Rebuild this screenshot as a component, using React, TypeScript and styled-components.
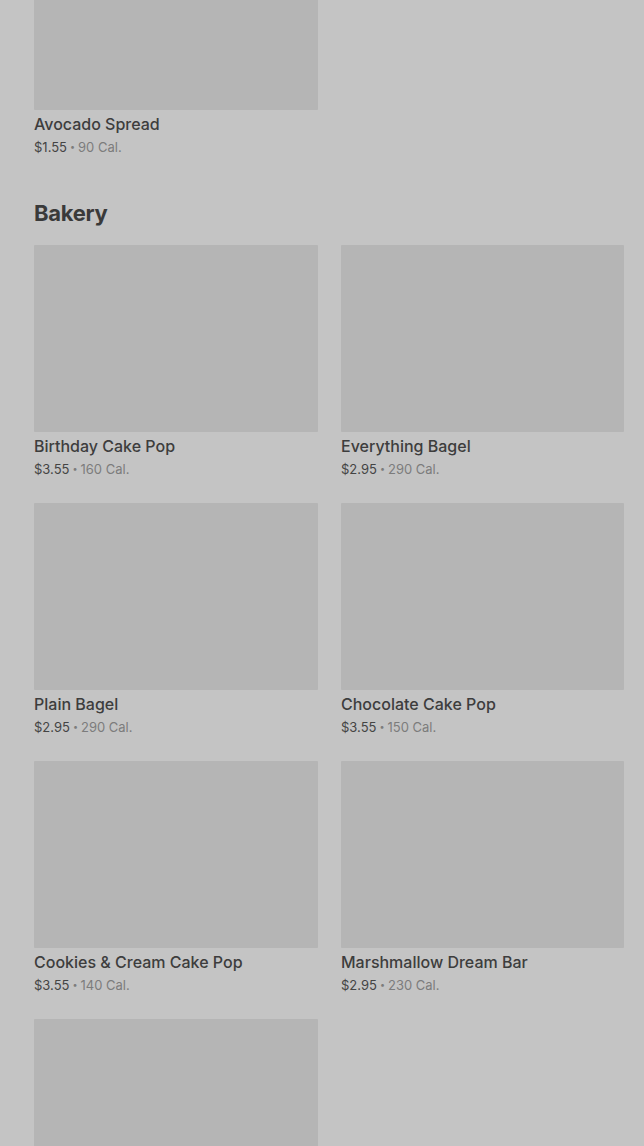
import React from "react";
import styled, { createGlobalStyle } from "styled-components";

type Item = { name?: string; price?: string; cal?: number };

// last bakery card is scrolled past the bottom edge, only its photo shows
const sections: { title?: string; items: Item[] }[] = [
    { items: [{ name: "Avocado Spread", price: "$1.55", cal: 90 }] },
    {
        title: "Bakery",
        items: [
            { name: "Birthday Cake Pop", price: "$3.55", cal: 160 },
            { name: "Everything Bagel", price: "$2.95", cal: 290 },
            { name: "Plain Bagel", price: "$2.95", cal: 290 },
            { name: "Chocolate Cake Pop", price: "$3.55", cal: 150 },
            { name: "Cookies & Cream Cake Pop", price: "$3.55", cal: 140 },
            { name: "Marshmallow Dream Bar", price: "$2.95", cal: 230 },
            {},
        ],
    },
];

const App: React.FC = () => {
    return (
        <Page>
            <GlobalStyle />
            <Scroller>
                {sections.map((section, i) => (
                    <Section key={i}>
                        {section.title && <Heading>{section.title}</Heading>}
                        <Grid>
                            {section.items.map((item, j) => (
                                <Card key={j}>
                                    <Thumb />
                                    {item.name && (
                                        <>
                                            <Name>{item.name}</Name>
                                            <Meta>
                                                <span className="price">{item.price}</span>
                                                <span className="dot">•</span>
                                                <span>{item.cal} Cal.</span>
                                            </Meta>
                                        </>
                                    )}
                                </Card>
                            ))}
                        </Grid>
                    </Section>
                ))}
            </Scroller>
        </Page>
    );
};

export default App;

const GlobalStyle = createGlobalStyle`
    html, body {
        margin: 0;
        padding: 0;
        background: #c4c4c4;
        overflow: hidden;
    }
`;

const Page = styled.div`
    width: 644px;
    height: 1146px;
    overflow: hidden;
    background: #c4c4c4;
    font-family: Inter, "Liberation Sans", sans-serif;
`;

const Scroller = styled.div`
    margin-top: -77px;
    padding: 0 20px 0 34px;
    display: flex;
    flex-direction: column;
    gap: 43px;
`;

const Section = styled.section`
    display: flex;
    flex-direction: column;
`;

const Heading = styled.h2`
    margin: 0 0 18px 0;
    font-size: 22px;
    line-height: 28px;
    font-weight: 700;
    letter-spacing: -0.3px;
    color: #3a3a3a;
`;

const Grid = styled.div`
    display: grid;
    grid-template-columns: 284px 283px;
    column-gap: 23px;
    row-gap: 25px;
`;

const Card = styled.div`
    display: flex;
    flex-direction: column;
`;

const Thumb = styled.div`
    height: 187px;
    background: #b5b5b5;
    border-radius: 1px;
    margin-bottom: 4px;
`;

const Name = styled.div`
    font-size: 16px;
    line-height: 20px;
    font-weight: 500;
    color: #3d3d3d;
`;

const Meta = styled.div`
    margin-top: 4px;
    font-size: 13px;
    line-height: 18px;
    color: #7c7c7c;
    display: flex;
    gap: 3px;
    > span.price {
        color: #444444;
    }
    > span.dot {
        font-size: 9px;
    }
`;
